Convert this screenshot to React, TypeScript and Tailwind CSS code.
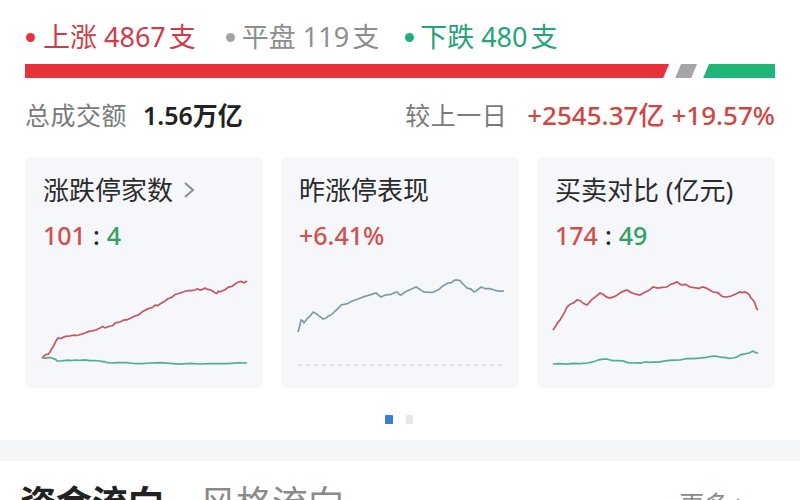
import React from "react";

type Pt = [number, number];

// subdivide key points and add a bit of deterministic noise so lines look like tick data
function jag(points: Pt[], amp = 1.2, steps = 4, seed = 1): string {
  let s = seed;
  const rnd = () => {
    s = (s * 9301 + 49297) % 233280;
    return s / 233280 - 0.5;
  };
  const out: Pt[] = [];
  for (let i = 0; i < points.length - 1; i++) {
    const [x0, y0] = points[i];
    const [x1, y1] = points[i + 1];
    for (let k = 0; k < steps; k++) {
      const t = k / steps;
      const n = k === 0 ? 0 : rnd() * amp * 2;
      out.push([x0 + (x1 - x0) * t, y0 + (y1 - y0) * t + n]);
    }
  }
  out.push(points[points.length - 1]);
  return out.map(([x, y]) => `${x.toFixed(1)},${y.toFixed(1)}`).join(" ");
}

const card1Red: Pt[] = [
  [17, 86], [25, 80], [33, 66], [45, 64], [60, 61], [75, 56], [85, 54], [95, 50],
  [110, 44], [125, 36], [135, 32], [145, 26], [155, 21], [170, 18], [180, 16],
  [190, 21], [197, 19], [210, 12], [222, 9],
];
const card1Green: Pt[] = [
  [17, 86], [27, 86], [33, 89], [50, 88], [75, 89], [85, 91], [125, 91], [175, 92], [222, 91],
];
const card2Line: Pt[] = [
  [17, 60], [20, 48], [23, 51], [32, 40], [42, 47], [50, 43], [60, 33], [77, 27],
  [95, 21], [100, 25], [115, 20], [120, 23], [135, 15], [143, 20], [153, 20],
  [167, 11], [177, 8], [183, 13], [193, 20], [200, 15], [213, 18], [223, 19],
];
const card3Red: Pt[] = [
  [16, 58], [23, 48], [30, 35], [40, 28], [50, 33], [63, 21], [73, 26], [90, 18],
  [103, 23], [116, 15], [130, 15], [140, 10], [153, 15], [166, 15], [176, 20],
  [190, 25], [203, 20], [210, 21], [216, 28], [221, 38],
];
const card3Green: Pt[] = [
  [16, 92], [50, 91], [70, 87], [96, 91], [116, 90], [143, 88], [176, 84], [196, 86], [216, 79], [221, 81],
];

function Card({
  title,
  chevron,
  value,
  children,
}: {
  title: string;
  chevron?: boolean;
  value: React.ReactNode;
  children: React.ReactNode;
}) {
  return (
    <div className="w-[238px] h-[231px] rounded-md bg-[#f5f7fa] pt-[18px]">
      <div className="px-[18px] flex items-center gap-2 h-[30px] text-[26px] leading-[30px] text-[#2b2b2b]">
        <span>{title}</span>
        {chevron && (
          <svg width="12" height="20" viewBox="0 0 12 20" className="ml-[2px]">
            <path d="M2 3 L10 10 L2 17" fill="none" stroke="#8c8c8c" strokeWidth="2" />
          </svg>
        )}
      </div>
      <div className="px-[18px] mt-[15px] h-[30px] text-[25px] leading-[30px] font-medium">{value}</div>
      <svg width="238" height="110" viewBox="0 0 238 110" className="block mt-[22px]">
        {children}
      </svg>
    </div>
  );
}

export default function App() {
  const font = { fontFamily: '"Noto Sans", "Noto Sans CJK SC", sans-serif' };
  return (
    <div className="w-[800px] h-[500px] bg-white overflow-hidden" style={font}>
      <div className="px-[25px]">
        {/* counts */}
        <div className="pt-[22px] flex items-center h-[52px] text-[27px] leading-[30px]">
          <div className="flex items-center text-[#cf3c48]">
            <span className="w-[9px] h-[9px] rounded-full bg-[#e8313a] mr-[8px] ml-[1px]" />
            <span>上涨 4867<span className="ml-[3px]">支</span></span>
          </div>
          <div className="flex items-center text-[#8e8e8e] ml-[30px]">
            <span className="w-[9px] h-[9px] rounded-full bg-[#a3a3a3] mr-[7px]" />
            <span>平盘 119<span className="ml-[3px]">支</span></span>
          </div>
          <div className="flex items-center text-[#25a47a] ml-[26px]">
            <span className="w-[9px] h-[9px] rounded-full bg-[#1fae78] mr-[6px]" />
            <span>下跌 480<span className="ml-[3px]">支</span></span>
          </div>
        </div>

        {/* ratio bar */}
        <div className="mt-[12px] flex h-[14px]">
          <div className="w-[645px] bg-[#e8313a] [clip-path:polygon(0_0,100%_0,calc(100%-6px)_100%,0_100%)]" />
          <div className="ml-[6px] w-[22px] bg-[#a4a5aa] [clip-path:polygon(6px_0,100%_0,calc(100%-6px)_100%,0_100%)]" />
          <div className="ml-[6px] w-[72px] bg-[#1fb577] [clip-path:polygon(6px_0,100%_0,100%_100%,0_100%)]" />
        </div>

        {/* turnover */}
        <div className="mt-[19px] flex items-center h-[36px] text-[25px] leading-[36px]">
          <span className="text-[#7a7a7a] tracking-[0.5px]">总成交额</span>
          <span className="ml-[16px] text-[#222] font-semibold">1.56万亿</span>
          <span className="ml-auto text-[#7a7a7a] tracking-[0.5px]">较上一日</span>
          <span className="ml-[20px] text-[26px] text-[#d0463f] font-medium">+2545.37亿</span>
          <span className="ml-[7px] text-[26px] text-[#d0463f] font-medium">+19.57%</span>
        </div>

        {/* cards */}
        <div className="mt-[24px] flex justify-between">
          <Card
            title="涨跌停家数"
            chevron
            value={
              <span>
                <span className="text-[#d0504c]">101</span>
                <span className="text-[#222] mx-[7px]">:</span>
                <span className="text-[#2ea55f]">4</span>
              </span>
            }
          >
            <polyline points={jag(card1Green, 0.6, 5, 7)} fill="none" stroke="#4fae96" strokeWidth="1.7" />
            <polyline points={jag(card1Red, 1.1, 4, 3)} fill="none" stroke="#c95460" strokeWidth="1.7" />
          </Card>
          <Card title="昨涨停表现" value={<span className="text-[#d0504c]">+6.41%</span>}>
            <line x1="17" y1="93" x2="224" y2="93" stroke="#c9ccd2" strokeWidth="1" strokeDasharray="4 4" />
            <polyline points={jag(card2Line, 1, 3, 11)} fill="none" stroke="#7f9ba8" strokeWidth="1.7" />
          </Card>
          <Card
            title="买卖对比 (亿元)"
            value={
              <span>
                <span className="text-[#d0504c]">174</span>
                <span className="text-[#222] mx-[7px]">:</span>
                <span className="text-[#2ea55f]">49</span>
              </span>
            }
          >
            <polyline points={jag(card3Green, 0.8, 5, 5)} fill="none" stroke="#4fae96" strokeWidth="1.7" />
            <polyline points={jag(card3Red, 1.3, 3, 9)} fill="none" stroke="#c95460" strokeWidth="1.7" />
          </Card>
        </div>

        {/* pager */}
        <div className="mt-[27px] flex justify-center gap-[13px] ml-[-2px]">
          <span className="w-[8px] h-[9px] rounded-[1px] bg-[#3b7ddb]" />
          <span className="w-[7px] h-[9px] rounded-[1px] bg-[#e4e6ea]" />
        </div>
      </div>

      <div className="mt-[16px] h-[21px] bg-[#f5f6f8]" />

      <div className="px-[20px] pt-[25px] flex items-center text-[36px] leading-[36px]">
        <span className="text-[#222] font-semibold">资金流向</span>
        <span className="ml-[36px] text-[#8a8a8a]">风格流向</span>
        <span className="ml-auto mr-[30px] text-[25px] text-[#8a8a8a]">更多 &gt;</span>
      </div>
    </div>
  );
}
